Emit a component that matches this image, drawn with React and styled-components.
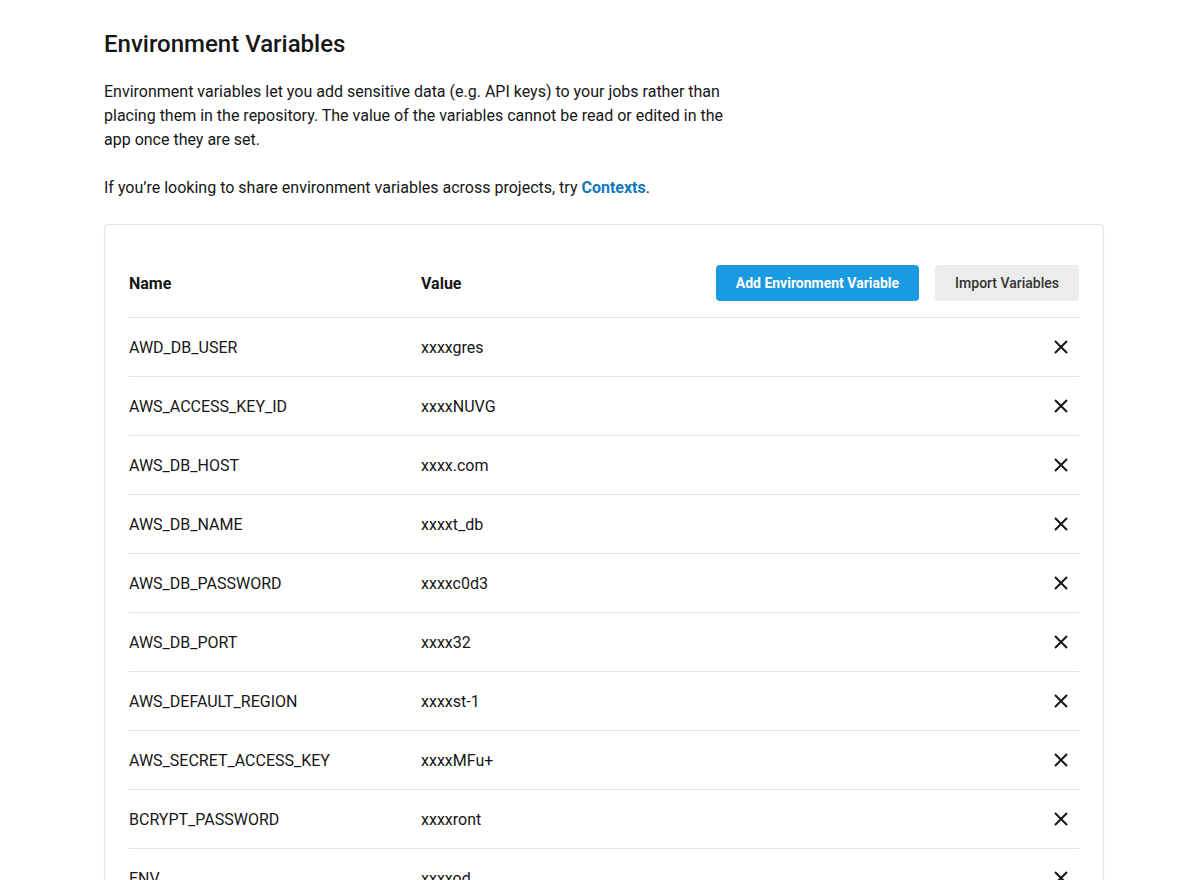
import React from 'react';
import styled, { createGlobalStyle } from 'styled-components';

const GlobalStyle = createGlobalStyle`
  body {
    margin: 0;
    background: #ffffff;
    font-family: Roboto, "Noto Sans", sans-serif;
    color: #161616;
  }
`;

const variables = [
  ['AWD_DB_USER', 'xxxxgres'],
  ['AWS_ACCESS_KEY_ID', 'xxxxNUVG'],
  ['AWS_DB_HOST', 'xxxx.com'],
  ['AWS_DB_NAME', 'xxxxt_db'],
  ['AWS_DB_PASSWORD', 'xxxxc0d3'],
  ['AWS_DB_PORT', 'xxxx32'],
  ['AWS_DEFAULT_REGION', 'xxxxst-1'],
  ['AWS_SECRET_ACCESS_KEY', 'xxxxMFu+'],
  ['BCRYPT_PASSWORD', 'xxxxront'],
  ['ENV', 'xxxxod'],
];

function CloseIcon() {
  return (
    <svg width="14" height="14" viewBox="0 0 14 14">
      <path d="M1 1L13 13M13 1L1 13" stroke="#161616" strokeWidth="2" />
    </svg>
  );
}

export default function App() {
  return (
    <>
      <GlobalStyle />
      <Page>
        <Title>Environment Variables</Title>
        <Intro>
          Environment variables let you add sensitive data (e.g. API keys) to your jobs rather than
          placing them in the repository. The value of the variables cannot be read or edited in the
          app once they are set.
        </Intro>
        <Intro>
          If you’re looking to share environment variables across projects, try{' '}
          <Link href="#">Contexts</Link>.
        </Intro>
        <Card>
          <HeaderRow>
            <NameCell bold>Name</NameCell>
            <ValueCell bold>Value</ValueCell>
            <Actions>
              <PrimaryButton>Add Environment Variable</PrimaryButton>
              <SecondaryButton>Import Variables</SecondaryButton>
            </Actions>
          </HeaderRow>
          {variables.map(([name, value]) => (
            <Row key={name}>
              <NameCell>{name}</NameCell>
              <ValueCell>{value}</ValueCell>
              <RemoveButton aria-label={`Remove ${name}`}>
                <CloseIcon />
              </RemoveButton>
            </Row>
          ))}
        </Card>
      </Page>
    </>
  );
}

const Page = styled.div`
  width: 1000px;
  margin: 0 0 0 104px;
  padding-top: 28px;
`;

const Title = styled.h1`
  margin: 0 0 20px;
  font-size: 24px;
  line-height: 32px;
  font-weight: 500;
  color: #161616;
`;

const Intro = styled.p`
  margin: 0 0 24px;
  max-width: 625px;
  font-size: 16px;
  line-height: 24px;
  color: #161616;
`;

const Link = styled.a`
  color: #1278c1;
  font-weight: 700;
  text-decoration: none;
`;

const Card = styled.div`
  margin-top: 3px;
  border: 1px solid #e3e3e3;
  border-radius: 4px;
  padding: 24px 24px 0;
  box-shadow: 0 1px 2px rgba(0, 0, 0, 0.03);
`;

const HeaderRow = styled.div`
  display: flex;
  align-items: center;
  height: 68px;
  border-bottom: 1px solid #e3e3e3;
`;

const Row = styled.div`
  display: flex;
  align-items: center;
  height: 58px;
  border-bottom: 1px solid #e3e3e3;
`;

const NameCell = styled.div`
  width: 292px;
  font-size: 16px;
  font-weight: ${(p) => (p.bold ? 700 : 400)};
  color: #161616;
`;

const ValueCell = styled(NameCell)`
  flex: 1;
  width: auto;
`;

const Actions = styled.div`
  display: flex;
  gap: 16px;
`;

const PrimaryButton = styled.button`
  height: 36px;
  padding: 0 20px;
  border: none;
  border-radius: 4px;
  background: #1a9ae0;
  color: #ffffff;
  font-family: inherit;
  font-size: 14px;
  font-weight: 700;
  cursor: pointer;
`;

const SecondaryButton = styled(PrimaryButton)`
  background: #ececec;
  color: #333333;
  font-weight: 500;
`;

const RemoveButton = styled.button`
  display: flex;
  align-items: center;
  justify-content: center;
  width: 24px;
  height: 24px;
  margin-right: 6px;
  padding: 0;
  border: none;
  background: transparent;
  cursor: pointer;
`;
